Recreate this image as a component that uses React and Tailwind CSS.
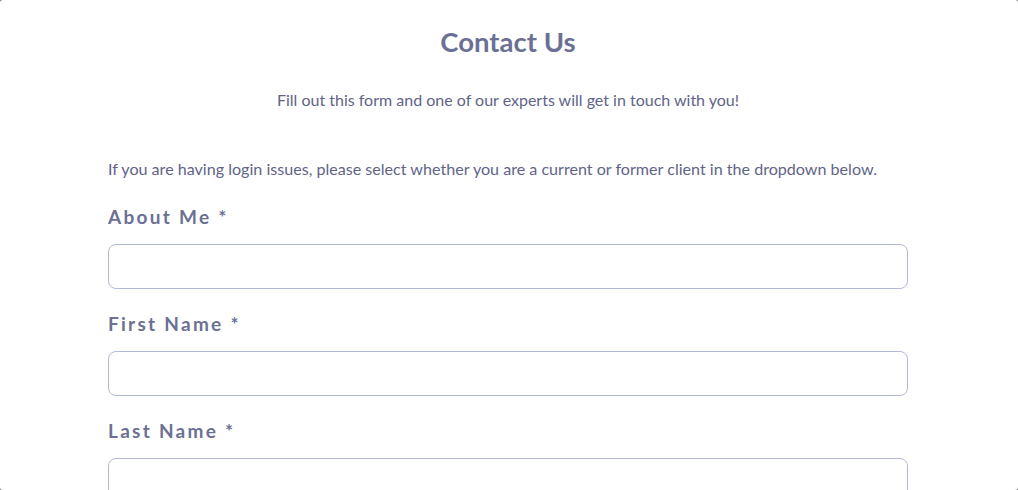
export default function App() {
  const labels = ["About Me *", "First Name *", "Last Name *"];
  return (
    <div className="w-[1018px] h-[490px] bg-[#8a8a8a] overflow-hidden" style={{ fontFamily: "Lato, 'Open Sans', sans-serif" }}>
      <div className="w-full h-full bg-white rounded-[3px] overflow-hidden">
        <div className="w-[800px] ml-[108px] flex flex-col">
          <h1 className="text-center text-[27.5px] leading-[30px] font-bold text-[#6b7094] mt-[27px]">Contact Us</h1>
          <p className="text-center text-[16px] leading-[20px] text-[#5f6488] mt-[33px]">
            Fill out this form and one of our experts will get in touch with you!
          </p>
          <p className="text-[16.1px] leading-[20px] text-[#5f6488] mt-[49px]">
            If you are having login issues, please select whether you are a current or former client in the dropdown below.
          </p>
          {labels.map((l, i) => (
            <div key={l} className={i === 0 ? "mt-[27px]" : "mt-[24px]"}>
              <div className="text-[19px] leading-[22px] font-bold tracking-[0.12em] text-[#6b7094]">{l}</div>
              <div className="mt-[16px] h-[45px] w-[800px] rounded-[8px] border border-[#b3b8d4] bg-white" />
            </div>
          ))}
        </div>
      </div>
    </div>
  );
}
